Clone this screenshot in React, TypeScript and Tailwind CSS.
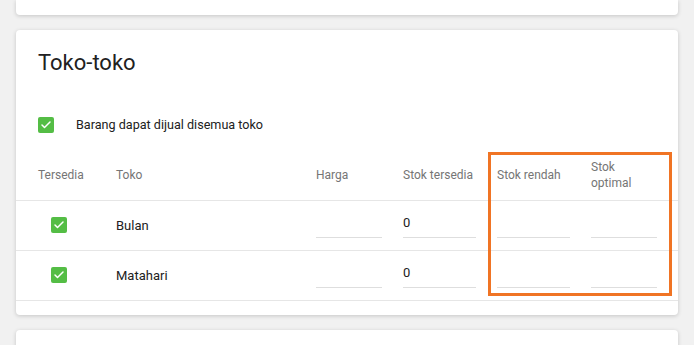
import { Check } from 'lucide-react';

const stores = [
  { name: 'Bulan', stock: '0' },
  { name: 'Matahari', stock: '0' },
];

function GreenBox() {
  return (
    <span className="flex h-4 w-4 items-center justify-center rounded-[2px] bg-[#54bd45]">
      <Check className="h-3 w-3 text-white" strokeWidth={3} />
    </span>
  );
}

function Field({ value, w }: { value?: string; w: string }) {
  return (
    <div className={`${w} mt-[9px] h-[28px] self-start border-b border-[#dedede] pt-[5px] text-[13px] leading-[16px] text-[#212121]`}>
      {value}
    </div>
  );
}

const cols = 'grid grid-cols-[78px_200px_87px_94px_94px_87px]';

export default function App() {
  return (
    <div className="h-screen overflow-hidden bg-[#f1f1f1] px-4 font-['Roboto',sans-serif]">
      <div className="h-[15px] rounded-b bg-white shadow-[0_1px_4px_rgba(0,0,0,0.18)]" />

      <div className="relative mt-[15px] h-[285px] rounded bg-white shadow-[0_1px_4px_rgba(0,0,0,0.18)]">
        <h2 className="pl-[22px] pt-[20px] text-[22px] leading-[26px] text-[#212121]">Toko-toko</h2>

        <div className="mt-[40px] flex items-center pl-[22px]">
          <GreenBox />
          <span className="ml-[22px] text-[12.6px] text-[#212121]">Barang dapat dijual disemua toko</span>
        </div>

        {/* header */}
        <div className={`${cols} mt-[16px] h-[50px] items-center border-b border-[#e6e6e6] pl-[22px] text-[12px] leading-[16px] text-[#757575]`}>
          <span>Tersedia</span>
          <span>Toko</span>
          <span>Harga</span>
          <span>Stok tersedia</span>
          <span>Stok rendah</span>
          <span className="-mt-[1px]">
            Stok
            <br />
            optimal
          </span>
        </div>

        {stores.map((s) => (
          <div key={s.name} className={`${cols} h-[50px] items-center border-b border-[#e6e6e6] pl-[22px]`}>
            <span className="pl-[13px]">
              <GreenBox />
            </span>
            <span className="text-[13px] text-[#212121]">{s.name}</span>
            <Field w="w-[66px]" />
            <Field w="w-[73px]" value={s.stock} />
            <Field w="w-[73px]" />
            <Field w="w-[66px]" />
          </div>
        ))}

        {/* highlight annotation */}
        <div className="pointer-events-none absolute left-[472px] top-[122px] h-[144px] w-[184px] border-[3px] border-[#f07424]" />
      </div>

      <div className="mt-[15px] h-[40px] rounded-t bg-white shadow-[0_1px_4px_rgba(0,0,0,0.18)]" />
    </div>
  );
}
